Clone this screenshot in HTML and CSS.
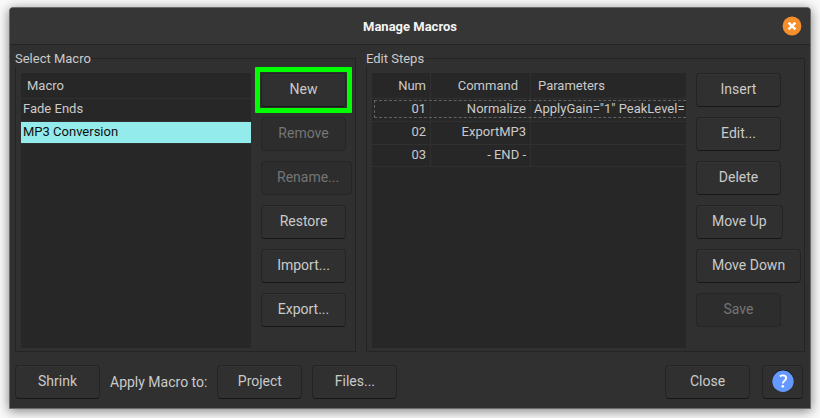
FILE: index.html
```html
<!DOCTYPE html>
<html lang="en">
<head>
<meta charset="utf-8">
<title>Manage Macros</title>
<link rel="stylesheet" href="styles.css">
</head>
<body>
<main class="window">
  <header class="titlebar">
    <h1 class="title">Manage Macros</h1>
    <button class="close" type="button" aria-label="Close window">
      <svg viewBox="0 0 20 20" width="20" height="20" aria-hidden="true">
        <circle cx="10" cy="10" r="9.4" fill="#f58f2c"/>
        <path d="M6.6 6.600l6.800 6.800M13.400 6.600l-6.800 6.800" stroke="#fff" stroke-width="2.400"/>
      </svg>
    </button>
  </header>

  <div class="panels">
    <fieldset class="panel">
      <legend>Select Macro</legend>
      <div class="panel-body">
        <div class="list">
          <table class="macros">
            <thead><tr><th>Macro</th></tr></thead>
            <tbody>
              <tr><td>Fade Ends</td></tr>
              <tr class="selected"><td>MP3 Conversion</td></tr>
            </tbody>
          </table>
        </div>
        <div class="buttons buttons-macros">
          <button class="btn highlighted" type="button">New</button>
          <button class="btn" type="button" disabled>Remove</button>
          <button class="btn btn-full" type="button" disabled>Rename...</button>
          <button class="btn" type="button">Restore</button>
          <button class="btn" type="button">Import...</button>
          <button class="btn" type="button">Export...</button>
        </div>
      </div>
    </fieldset>

    <fieldset class="panel">
      <legend>Edit Steps</legend>
      <div class="panel-body">
        <div class="list">
          <table class="steps">
            <colgroup><col class="col-num"><col class="col-command"><col></colgroup>
            <thead><tr><th>Num</th><th>Command</th><th>Parameters</th></tr></thead>
            <tbody>
              <tr class="focused"><td>01</td><td>Normalize</td><td>ApplyGain="1" PeakLevel=</td></tr>
              <tr><td>02</td><td>ExportMP3</td><td></td></tr>
              <tr><td>03</td><td>- END -</td><td></td></tr>
            </tbody>
          </table>
        </div>
        <div class="buttons buttons-steps">
          <button class="btn" type="button">Insert</button>
          <button class="btn" type="button">Edit...</button>
          <button class="btn" type="button">Delete</button>
          <button class="btn" type="button">Move Up</button>
          <button class="btn btn-full" type="button">Move Down</button>
          <button class="btn" type="button" disabled>Save</button>
        </div>
      </div>
    </fieldset>
  </div>

  <footer class="footer">
    <button class="btn" type="button">Shrink</button>
    <span class="apply" id="apply">Apply Macro to:</span>
    <button class="btn" type="button" aria-describedby="apply">Project</button>
    <button class="btn" type="button" aria-describedby="apply">Files...</button>
    <div class="footer-end">
      <button class="btn" type="button">Close</button>
      <button class="btn btn-help" type="button" aria-label="Help">
        <svg viewBox="0 0 24 24" width="24" height="24" aria-hidden="true">
          <circle cx="12" cy="10.300" r="10.800" fill="#151515"/>
          <circle cx="12" cy="11.300" r="10.700" fill="#6699ff"/>
          <path d="M8.900 6.400c1-.7 2-1 3.100-1 2 0 3.100 1 3.100 2.600 0 2.700-3.300 2.600-3.300 5.400" fill="none" stroke="#fff" stroke-width="1.900"/>
          <circle cx="11.800" cy="16.300" r="1.300" fill="#fff"/>
        </svg>
      </button>
    </div>
  </footer>
</main>
</body>
</html>
```

FILE: styles.css
```css
* {
  box-sizing: border-box;
}

body {
  margin: 0;
  padding: 7px 9px 9px;
  background: #fafafa;
  color: #cacaca;
  font: 14px/17px Roboto, "Noto Sans", sans-serif;
  overflow: hidden;
}

.window {
  border: 1px solid #6b6b6b;
  border-radius: 4px 4px 0 0;
  background: #303030;
  box-shadow: 0 2px 12px rgba(0, 0, 0, 0.5);
}

.titlebar {
  position: relative;
  height: 37px;
  display: flex;
  align-items: center;
  justify-content: center;
  background: #363636;
  border-bottom: 1px solid #242424;
  border-radius: 3px 3px 0 0;
}

.title {
  margin: 0;
  font-size: 13px;
  font-weight: 700;
  color: #f4f4f4;
}

.close {
  position: absolute;
  right: 8px;
  top: 8px;
  padding: 0;
  border: 0;
  background: none;
}

svg {
  display: block;
}

.panels {
  display: grid;
  grid-template-columns: 341fr 439fr;
  gap: 10px;
  padding: 5px 5px 0;
}

.panel {
  min-width: 0;
  margin: 0;
  padding: 6px 3px 3px 5px;
  border: 1px solid #242424;
}

legend {
  margin-left: -6px;
  padding: 0;
  font-size: 13px;
}

.panel-body {
  display: flex;
  gap: 10px;
}

.list {
  flex: 1;
  min-width: 0;
  min-height: 275px;
  background: #272727;
  font-size: 13px;
}

table {
  width: 100%;
  table-layout: fixed;
  border-spacing: 0;
}

th,
td {
  overflow: hidden;
  white-space: nowrap;
  text-align: left;
  font-weight: 400;
}

th {
  height: 25px;
  padding: 0 6px;
}

td {
  height: 23px;
  padding: 0 4px 3px 2px;
  border-top: 1px solid #303030;
}

tbody tr:last-child td {
  border-bottom: 1px solid #303030;
}

.selected td {
  background: #94ebeb;
  color: #101010;
}

.col-num {
  width: 59px;
}

.col-command {
  width: 100px;
}

.steps th:not(:last-child),
.steps td:not(:last-child) {
  text-align: right;
  border-right: 1px solid #303030;
}

.steps th:nth-child(1) {
  padding-right: 4px;
}

.steps th:nth-child(2) {
  padding-right: 12px;
}

.steps th:last-child {
  padding-left: 7px;
}

.steps td:last-child {
  padding-left: 3px;
  padding-right: 0;
}

.focused {
  position: relative;
}

.focused td:first-child::after {
  content: "";
  position: absolute;
  inset: 2px 0 3px 2px;
  border: 1px dashed #626262;
  border-right: 0;
}

.buttons {
  display: flex;
  flex-direction: column;
  align-items: flex-start;
  gap: 10px;
}

.buttons-macros {
  width: 91px;
}

.buttons-steps {
  width: 105px;
}

.btn {
  min-width: 85px;
  height: 34px;
  padding: 0 15px 2px;
  border: 1px solid #242424;
  border-bottom-color: #181818;
  border-radius: 4px;
  background: #303030;
  box-shadow: inset 0 1px #353535;
  color: #cacaca;
  font: inherit;
  white-space: nowrap;
}

.btn:disabled {
  border-color: #262626;
  background: #2d2d2d;
  box-shadow: none;
  color: #757575;
}

.btn-full {
  width: 100%;
}

.highlighted {
  position: relative;
}

.highlighted::after {
  content: "";
  position: absolute;
  inset: -7px;
  border: 5px solid #00ff00;
  border-radius: 1px;
}

.footer {
  display: flex;
  align-items: center;
  gap: 10px;
  padding: 13px 7px 9px 5px;
}

.apply {
  min-width: 96px;
  padding-top: 1px;
}

.footer-end {
  display: flex;
  gap: 12px;
  margin-left: auto;
}

.btn-help {
  display: flex;
  align-items: center;
  justify-content: center;
  min-width: 41px;
  padding: 0;
}
```
